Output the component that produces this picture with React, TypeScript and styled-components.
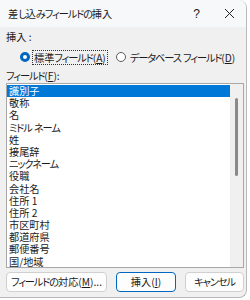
import { Fragment } from "react";
import styled, { createGlobalStyle } from "styled-components";

const fields = [
  "識別子",
  "敬称",
  "名",
  "ミドル ネーム",
  "姓",
  "接尾辞",
  "ニックネーム",
  "役職",
  "会社名",
  "住所 1",
  "住所 2",
  "市区町村",
  "都道府県",
  "郵便番号",
  "国/地域",
];

// kana in the dialog font are much narrower than in Noto, squeeze them
const Jp = ({ text }: { text: string }) => (
  <>
    {text.split(/([\u3040-\u30ff]+)/).map((part, i) =>
      /[\u3040-\u30ff]/.test(part) ? (
        <Styled.Kana key={i}>{part}</Styled.Kana>
      ) : (
        <Fragment key={i}>{part}</Fragment>
      )
    )}
  </>
);

const Global = createGlobalStyle`
  html, body {
    margin: 0;
    padding: 0;
    background: #ffffff;
  }
  body {
    font-family: "Noto Sans CJK JP", "Noto Sans", sans-serif;
    font-size: 10.2px;
    font-feature-settings: "palt" 1;
    color: #1b1b1b;
    white-space: nowrap;
  }
`;

export default function App() {
  return (
    <>
      <Global />
      <Styled.Window>
        <Styled.TitleBar>
          <Styled.Title>
            <Jp text="差し込みフィールドの挿入" />
          </Styled.Title>
          <Styled.Help>?</Styled.Help>
          <Styled.Close>
            <svg width="11" height="11" viewBox="0 0 11 11">
              <path d="M1 1L10 10M10 1L1 10" stroke="#222" strokeWidth="1" />
            </svg>
          </Styled.Close>
        </Styled.TitleBar>
        <Styled.Body>
          <Styled.Label>挿入 :</Styled.Label>
          <Styled.RadioRow>
            <Styled.Radio>
              <Styled.Dot $checked />
              <Styled.RadioText $focused>
                <Jp text="標準フィールド" />(<u>A</u>)
              </Styled.RadioText>
            </Styled.Radio>
            <Styled.Radio>
              <Styled.Dot />
              <Styled.RadioText>
                <Jp text="データベース フィールド" />(<u>D</u>)
              </Styled.RadioText>
            </Styled.Radio>
          </Styled.RadioRow>
          <Styled.Label $tight>
            <Jp text="フィールド" />(<u>F</u>):
          </Styled.Label>
          <Styled.ListBox>
            <Styled.Items>
              {fields.map((f, i) => (
                <Styled.Item key={f} $selected={i === 0}>
                  <Jp text={f} />
                </Styled.Item>
              ))}
            </Styled.Items>
            <Styled.Scroll>
              <Styled.Thumb />
            </Styled.Scroll>
          </Styled.ListBox>
          <Styled.Buttons>
            <Styled.Button $w={101}>
              <Jp text="フィールドの対応" />(<u>M</u>)...
            </Styled.Button>
            <Styled.Button $w={60} $default>
              挿入(<u>I</u>)
            </Styled.Button>
            <Styled.Button $w={59}>
              <Jp text="キャンセル" />
            </Styled.Button>
          </Styled.Buttons>
        </Styled.Body>
      </Styled.Window>
    </>
  );
}

const Styled = {
  Window: styled.div`
    width: 247px;
    height: 298px;
    box-sizing: border-box;
    background: #f0f0f0;
    border-right: 1px solid #b9b9b9;
    border-bottom: 1px solid #b9b9b9;
    border-radius: 0 8px 8px 0;
    overflow: hidden;
  `,
  Kana: styled.span`
    letter-spacing: -1.1px;
  `,
  TitleBar: styled.div`
    display: flex;
    align-items: center;
    height: 27px;
    background: #f6f8fa;
    padding: 0 11px 0 8px;
  `,
  Title: styled.div`
    flex: 1;
    line-height: 14px;
  `,
  Help: styled.div`
    font-family: "Liberation Sans", sans-serif;
    font-size: 12px;
    margin-right: 24px;
  `,
  Close: styled.div`
    display: flex;
    width: 11px;
    height: 11px;
  `,
  Body: styled.div`
    display: flex;
    flex-direction: column;
    padding: 2px 0 0 6px;
  `,
  Label: styled.div<{ $tight?: boolean }>`
    height: ${(p) => (p.$tight ? 14 : 16)}px;
    line-height: 14px;
    margin-top: ${(p) => (p.$tight ? 0 : 1)}px;
  `,
  RadioRow: styled.div`
    display: flex;
    align-items: center;
    gap: 8px;
    height: 16px;
    padding-left: 14px;
    margin: 3px 0 4px;
  `,
  Radio: styled.div`
    display: flex;
    align-items: center;
    gap: 2px;
  `,
  Dot: styled.div<{ $checked?: boolean }>`
    width: 10px;
    height: 10px;
    box-sizing: border-box;
    border-radius: 50%;
    border: ${(p) => (p.$checked ? "3px solid #0067c0" : "1px solid #5c5c5c")};
    background: #fff;
  `,
  RadioText: styled.div<{ $focused?: boolean }>`
    line-height: 13px;
    padding: 0 1px;
    border: 1px dotted ${(p) => (p.$focused ? "#333" : "transparent")};
  `,
  ListBox: styled.div`
    display: flex;
    width: 238px;
    height: 185px;
    box-sizing: border-box;
    border: 1px solid #a8a8a8;
    background: #fff;
  `,
  Items: styled.div`
    flex: 1;
    padding-top: 1px;
    overflow: hidden;
  `,
  Item: styled.div<{ $selected?: boolean }>`
    height: 12.2px;
    line-height: 12.2px;
    padding-left: 2px;
    background: ${(p) => (p.$selected ? "#0078d7" : "transparent")};
    color: ${(p) => (p.$selected ? "#fff" : "#1b1b1b")};
  `,
  Scroll: styled.div`
    width: 13px;
    background: #f0f0f0;
    display: flex;
    justify-content: center;
    align-items: flex-start;
    padding-top: 14px;
  `,
  Thumb: styled.div`
    width: 3px;
    height: 78px;
    border-radius: 2px;
    background: #8a8a8a;
  `,
  Buttons: styled.div`
    display: flex;
    gap: 9px;
    margin-top: 4px;
  `,
  Button: styled.div<{ $w: number; $default?: boolean }>`
    width: ${(p) => p.$w}px;
    height: 20px;
    box-sizing: border-box;
    display: flex;
    align-items: center;
    justify-content: center;
    background: #fdfdfd;
    border: 1px solid ${(p) => (p.$default ? "#0067c0" : "#d0d0d0")};
    border-radius: 4px;
    line-height: 14px;
  `,
};
